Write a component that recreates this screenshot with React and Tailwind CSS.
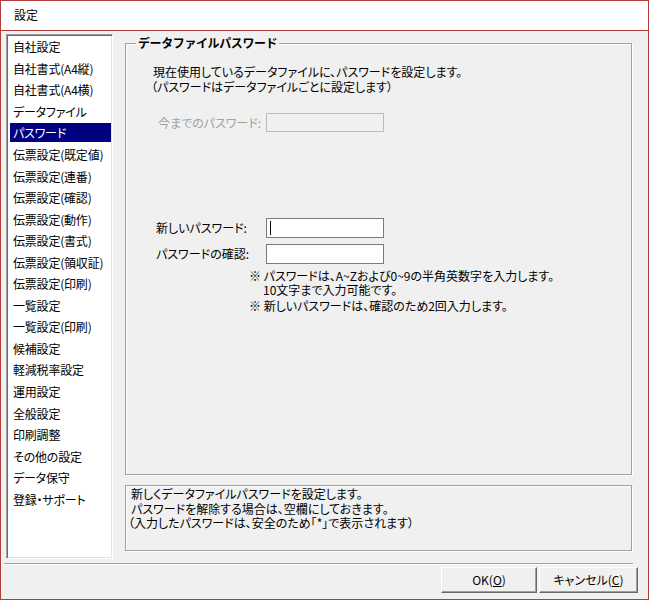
import React from 'react';

const items = [
  '自社設定',
  '自社書式(A4縦)',
  '自社書式(A4横)',
  'データファイル',
  'パスワード',
  '伝票設定(既定値)',
  '伝票設定(連番)',
  '伝票設定(確認)',
  '伝票設定(動作)',
  '伝票設定(書式)',
  '伝票設定(領収証)',
  '伝票設定(印刷)',
  '一覧設定',
  '一覧設定(印刷)',
  '候補設定',
  '軽減税率設定',
  '運用設定',
  '全般設定',
  '印刷調整',
  'その他の設定',
  'データ保守',
  '登録・サポート',
];

const font = "font-['Noto_Sans_CJK_JP',sans-serif] [font-feature-settings:'palt'] text-[12px] text-black";

const etched = 'border border-[#a0a0a0] shadow-[inset_1px_1px_0_#fff,1px_1px_0_#fff]';

const Button = ({ label, hotkey, width }) => (
  <button
    className={`${width} h-[26px] bg-[#f0f0f0] border border-t-white border-l-white border-r-[#696969] border-b-[#696969] shadow-[inset_-1px_-1px_0_#a0a0a0] flex items-center justify-center leading-none`}
  >
    {label}(<span className="underline">{hotkey}</span>)
  </button>
);

export default function App() {
  return (
    <div className={`${font} w-[649px] h-[600px] border border-[#b23c3c] flex flex-col bg-white`}>
      {/* title bar */}
      <div className="h-[30px] shrink-0 bg-white border-b border-[#b23c3c] flex items-center pl-[13px] pb-[1px]">
        設定
      </div>

      <div className="flex-1 bg-[#f0f0f0] flex flex-col">
        <div className="flex pl-[5px] pt-[3px]">
          {/* list */}
          <ul className="w-[107px] h-[525px] bg-white border border-t-[#a0a0a0] border-l-[#a0a0a0] border-r-white border-b-white shadow-[inset_1px_1px_0_#696969,inset_-1px_-1px_0_#e3e3e3] pl-[3px] pr-[1px] pt-[1px]">
            {items.map((item) => (
              <li key={item} className="h-[21.55px] flex items-center">
                <span
                  className={`block w-full h-[19px] leading-[19px] pl-[3px] whitespace-nowrap tracking-[-0.2px] ${
                    item === 'パスワード' ? 'bg-[#000080] text-white' : ''
                  }`}
                >
                  {item}
                </span>
              </li>
            ))}
          </ul>

          {/* right column */}
          <div className="ml-[12px] w-[507px] flex flex-col">
            <fieldset className={`${etched} h-[440px] mt-[1px] px-0`}>
              <legend className="ml-[10px] px-[2px] font-bold leading-[16px] bg-[#f0f0f0] [font-feature-settings:normal] tracking-[-0.4px]">
                データファイルパスワード
              </legend>

              <div className="pl-[27px] mt-[13px] leading-[15px]">
                <p>現在使用しているデータファイルに、パスワードを設定します。</p>
                <p className="-ml-[2px]">（パスワードはデータファイルごとに設定します）</p>
              </div>

              <div className="flex items-center mt-[19px] pl-[32px]">
                <span className="w-[108px] text-[#a0a0a0]">今までのパスワード:</span>
                <div className="w-[118px] h-[19px] border border-[#bcbcbc] bg-[#f0f0f0]" />
              </div>

              <div className="flex items-center mt-[86px] pl-[30px]">
                <span className="w-[110px]">新しいパスワード:</span>
                <div className="w-[118px] h-[20px] border border-[#7a7a7a] bg-white flex items-center pl-[3px]">
                  <div className="w-px h-[14px] bg-black" />
                </div>
              </div>

              <div className="flex items-center mt-[6px] pl-[30px]">
                <span className="w-[110px]">パスワードの確認:</span>
                <div className="w-[118px] h-[20px] border border-[#7a7a7a] bg-white" />
              </div>

              <div className="mt-[4px] pl-[123px] leading-[15px]">
                <p>※ パスワードは、A~Zおよび0~9の半角英数字を入力します。</p>
                <p className="pl-[14px] -mt-[1px]">10文字まで入力可能です。</p>
                <p className="mt-[1px]">※ 新しいパスワードは、確認のため2回入力します。</p>
              </div>
            </fieldset>

            <div className={`${etched} mt-[10px] h-[66px] pl-[5px] pt-[1px] leading-[14.5px]`}>
              <p>新しくデータファイルパスワードを設定します。</p>
              <p>パスワードを解除する場合は、空欄にしておきます。</p>
              <p className="-ml-[3px]">（入力したパスワードは、安全のため「*」で表示されます）</p>
            </div>
          </div>
        </div>

        {/* separator */}
        <div className="mt-[4px] ml-[3px] w-[629px] h-[2px] border-t border-[#a0a0a0] border-b border-b-white" />

        {/* buttons */}
        <div className="flex justify-end gap-[2px] pr-[10px] mt-[2px]">
          <Button label="OK" hotkey="O" width="w-[96px]" />
          <Button label="キャンセル" hotkey="C" width="w-[99px]" />
        </div>
      </div>
    </div>
  );
}
